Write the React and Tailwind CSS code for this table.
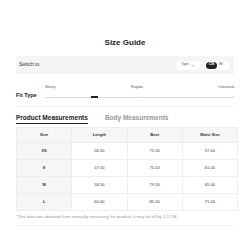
export default function App() {
    const rows = [
        { size: "XS", length: "56.50", bust: "71.50", waist: "57.00" },
        { size: "S",  length: "57.50", bust: "75.50", waist: "61.00" },
        { size: "M",  length: "58.50", bust: "79.50", waist: "65.00" },
        { size: "L",  length: "60.00", bust: "85.50", waist: "71.00" },
    ];

    return (
        <div className="w-[250px] h-[250px] bg-white px-4 pt-[39px] text-[#222]"
            style={{ fontFamily: "'Liberation Sans', Arial, sans-serif" }}
        >
            <h1 className="text-center text-[8px] font-bold leading-none">Size Guide</h1>

            {/* switch bar */}
            <div className="mt-[9px] h-[18px] bg-[#f5f5f5] flex items-center justify-between pl-[3px] pr-[4px]">
                <span className="text-[5px] text-[#333]">Switch to</span>
                <div className="flex items-center gap-[5px]">
                    <div className="h-[9px] w-[24px] rounded-full bg-white flex items-center justify-center gap-[2px] text-[3.5px] text-[#555]">
                        Type
                        <svg width="4" height="3" viewBox="0 0 4 3"><path d="M0.5 0.8 L2 2.2 L3.5 0.8" fill="none" stroke="#888" strokeWidth="0.5" /></svg>
                    </div>
                    <div className="h-[9px] w-[25px] rounded-full bg-white flex items-center p-[1px] text-[3.5px] font-bold">
                        <span className="h-[7px] w-[11px] rounded-full bg-[#222] text-white flex items-center justify-center">CM</span>
                        <span className="ml-[2px] text-[#444] font-normal">IN</span>
                    </div>
                </div>
            </div>

            {/* fit type */}
            <div className="mt-[12px] flex items-end pb-[8px] border-b border-[#eee]">
                <span className="w-[29px] text-[5.5px] font-bold leading-none mb-[-1px]">Fit Type</span>
                <div className="flex-1">
                    <div className="flex justify-between text-[3.5px] text-[#555] leading-none">
                        <span>Skinny</span><span>Regular</span><span>Oversized</span>
                    </div>
                    <div className="relative mt-[7px] h-px bg-[#ddd]">
                        <span className="absolute left-[46px] -top-[1px] h-[2px] w-[7px] bg-[#222]" />
                        <span className="absolute left-[96px] -top-[1px] h-[2px] w-px bg-[#ddd]" />
                        <span className="absolute right-0 -top-[1px] h-[2px] w-px bg-[#ddd]" />
                    </div>
                </div>
            </div>

            {/* tabs */}
            <div className="mt-[8px] flex gap-[17px] text-[6.5px] font-bold leading-none">
                <span className="pb-[2px] border-b-[1.5px] border-[#222]">Product Measurements</span>
                <span className="text-[#999]">Body Measurements</span>
            </div>

            {/* table */}
            <table className="mt-[3px] w-[222px] table-fixed border-collapse text-[4px] text-center text-[#333]">
                <thead>
                    <tr className="h-[15px] bg-[#f6f6f6] font-bold">
                        <th className="border border-[#eee]">Size</th>
                        <th className="border border-[#eee]">Length</th>
                        <th className="border border-[#eee]">Bust</th>
                        <th className="border border-[#eee]">Waist Size</th>
                    </tr>
                </thead>
                <tbody>
                    {rows.map((r) => (
                        <tr key={r.size} className="h-[17px]">
                            <td className="bg-[#f6f6f6] font-bold border border-[#eee]">{r.size}</td>
                            <td className="border border-[#eee]">{r.length}</td>
                            <td className="border border-[#eee]">{r.bust}</td>
                            <td className="border border-[#eee]">{r.waist}</td>
                        </tr>
                    ))}
                </tbody>
            </table>

            <p className="mt-[4px] pb-[6px] text-[4.2px] text-[#999] border-b border-[#f0f0f0] leading-none">
                *This data was obtained from manually measuring the product, it may be off by 1-2 CM.
            </p>
        </div>
    );
}
